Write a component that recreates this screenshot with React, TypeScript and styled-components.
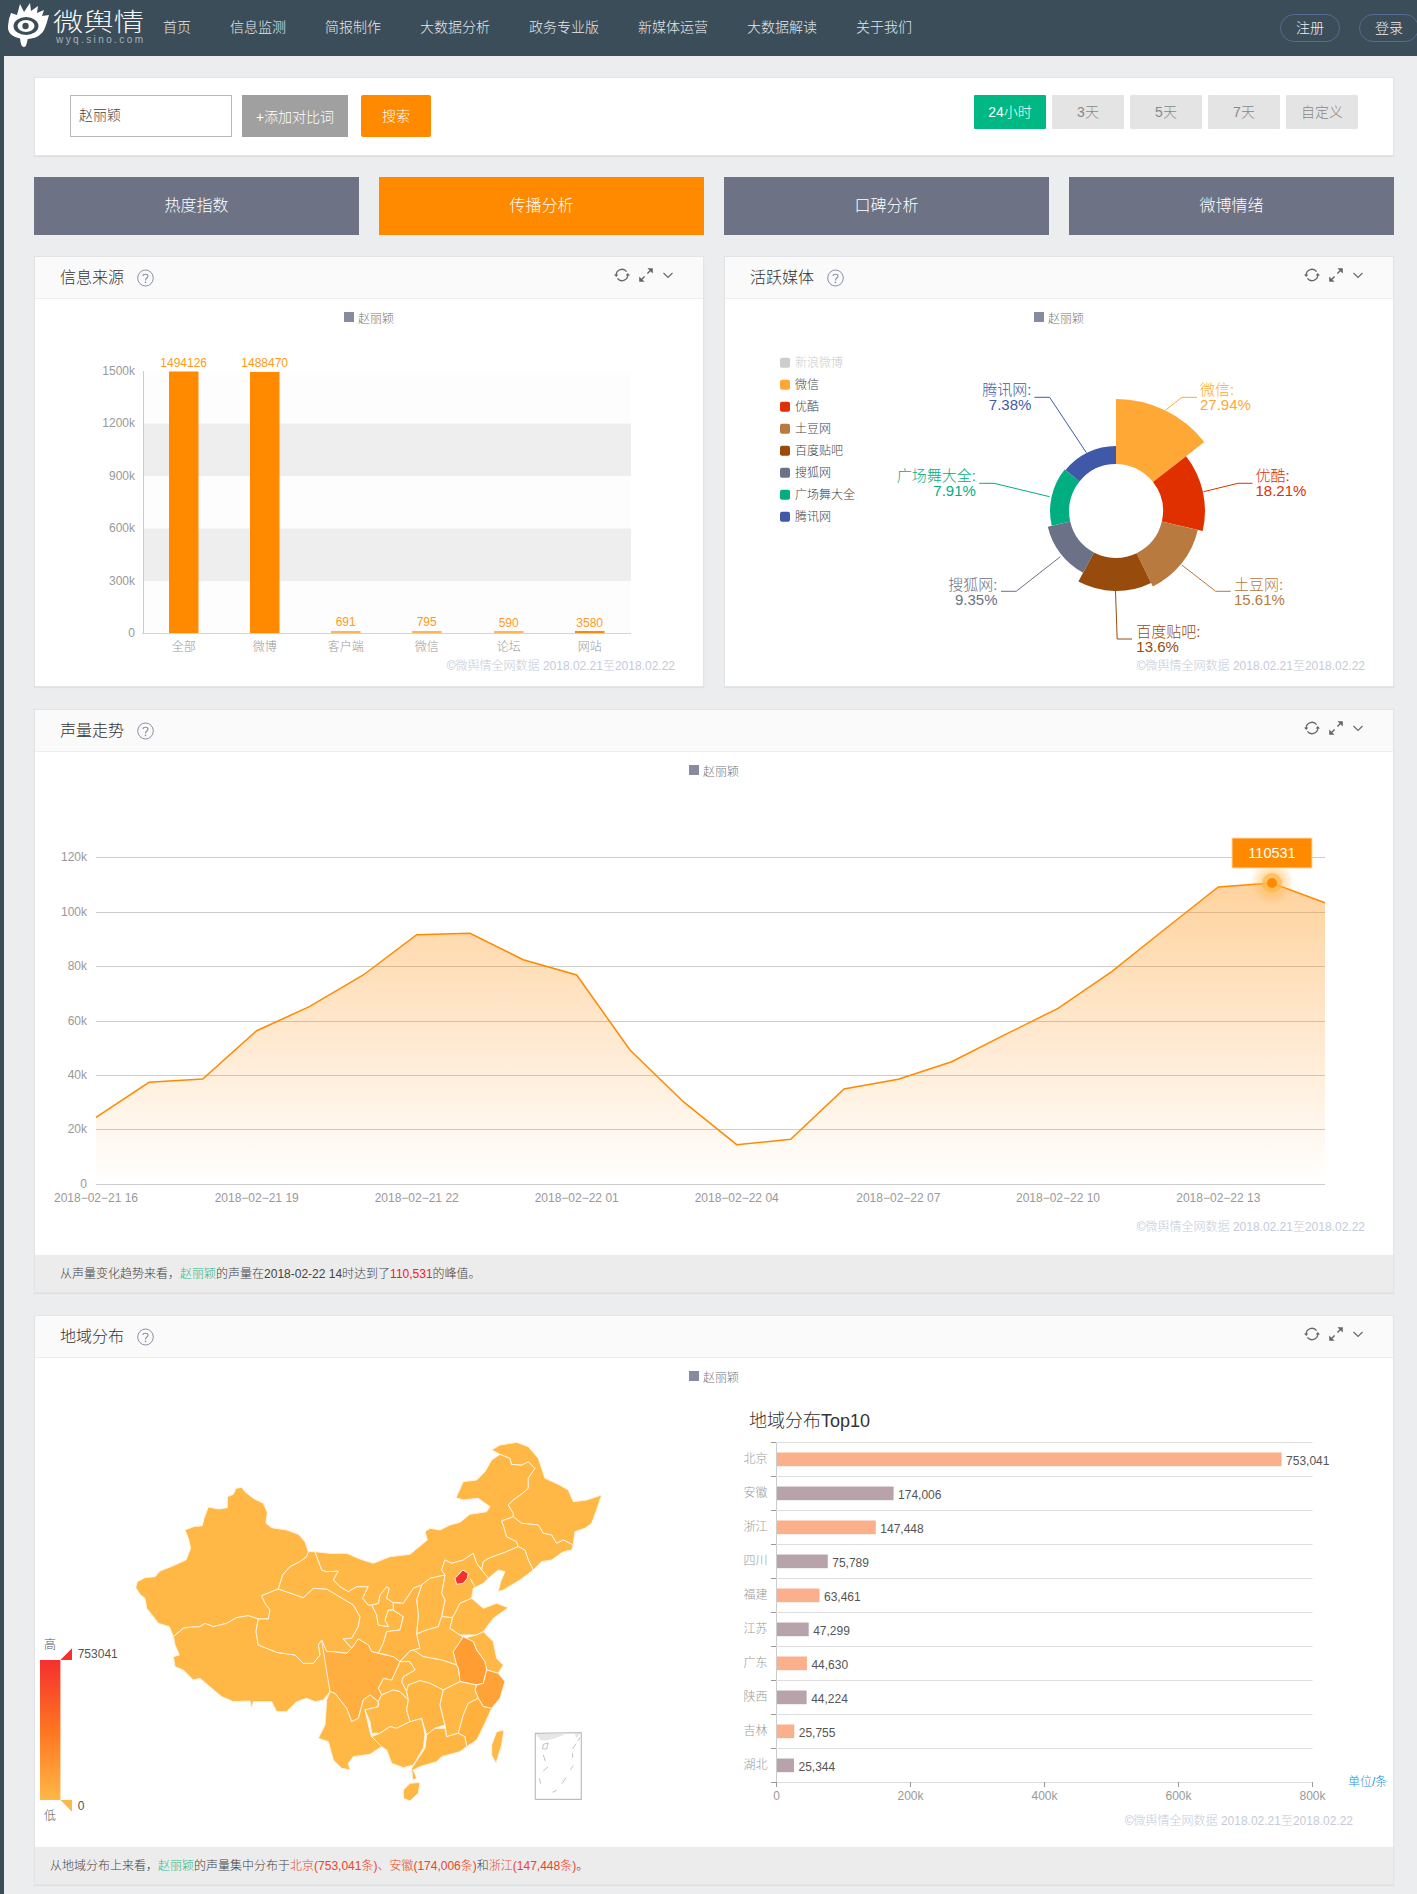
import React from "react";
import styled, { createGlobalStyle } from "styled-components";

const ORANGE = "#ff8a00";
const SLATE = "#3b4d58";

const GlobalStyle = createGlobalStyle`
  * { box-sizing: border-box; }
  html, body { margin: 0; padding: 0; }
  body {
    background: #ecedef;
    font-family: "Liberation Sans", "Noto Sans CJK SC", sans-serif;
    font-weight: 300;
    overflow-x: hidden;
  }
`;

const NAV = ["首页", "信息监测", "简报制作", "大数据分析", "政务专业版", "新媒体运营", "大数据解读", "关于我们"];
const RANGES = ["24小时", "3天", "5天", "7天", "自定义"];
const TABS = ["热度指数", "传播分析", "口碑分析", "微博情绪"];

const BARS = [
  { name: "全部", value: "1494126", x: 169, top: 371.5, vy: 363, color: ORANGE },
  { name: "微博", value: "1488470", x: 250, top: 372, vy: 363, color: ORANGE },
  { name: "客户端", value: "691", x: 331, top: 631, vy: 622, color: "#ffb652" },
  { name: "微信", value: "795", x: 412, top: 631, vy: 622, color: "#ffb652" },
  { name: "论坛", value: "590", x: 494, top: 631, vy: 623, color: "#ffb652" },
  { name: "网站", value: "3580", x: 575, top: 631, vy: 623, color: ORANGE },
];

const MEDIA_LEGEND = [
  { name: "新浪微博", color: "#ccc", off: true },
  { name: "微信", color: "#ffa836" },
  { name: "优酷", color: "#e03000" },
  { name: "土豆网", color: "#b87a3e" },
  { name: "百度贴吧", color: "#974b0d" },
  { name: "搜狐网", color: "#6b7186" },
  { name: "广场舞大全", color: "#00ae80" },
  { name: "腾讯网", color: "#3f59a8" },
];

const SLICES = [
  { from: 0, to: 52, r: 112, color: "#ffa836", name: "微信:", pct: "27.94%", line: "1165.8,410 1181.8,397.3 1197,397.3", tx: 1200, ty: 389.3, anchor: "start" },
  { from: 52, to: 103, r: 89, color: "#e03000", name: "优酷:", pct: "18.21%", line: "1203.5,491.7 1238,483.3 1252.5,483.3", tx: 1255.5, ty: 475.3, anchor: "start" },
  { from: 103, to: 154, r: 84, color: "#b87a3e", name: "土豆网:", pct: "15.61%", line: "1181.8,565 1215.7,591.3 1230.8,591.3", tx: 1234, ty: 584, anchor: "start" },
  { from: 154, to: 208, r: 80, color: "#974b0d", name: "百度贴吧:", pct: "13.6%", line: "1115.5,591 1117.2,639 1132,639", tx: 1136.3, ty: 631.7, anchor: "start" },
  { from: 208, to: 257, r: 70, color: "#6b7186", name: "搜狐网:", pct: "9.35%", line: "1060.4,556.7 1016.2,591.3 1001,591.3", tx: 997.5, ty: 584, anchor: "end" },
  { from: 257, to: 309, r: 66, color: "#00ae80", name: "广场舞大全:", pct: "7.91%", line: "1049.6,496.7 994,483.3 979.3,483.3", tx: 975.9, ty: 475.3, anchor: "end" },
  { from: 309, to: 360, r: 65, color: "#3f59a8", name: "腾讯网:", pct: "7.38%", line: "1086.4,452.7 1049.6,397.3 1034.4,397.3", tx: 1031.4, ty: 389.3, anchor: "end" },
];

const TREND: [number, number][] = [
  [96, 1117.3], [149, 1082.3], [202.7, 1079], [256.7, 1030.7], [309.3, 1006.7], [363.3, 975],
  [416.7, 934.7], [470, 933.3], [523.3, 959.7], [576.7, 975], [630, 1050], [683.3, 1101.7],
  [736.7, 1144.7], [790.7, 1139.3], [844, 1089], [898.3, 1079.3], [951.7, 1061.7], [1005, 1034.7],
  [1058, 1008.3], [1111.7, 971.7], [1165, 929], [1218.3, 887], [1271.7, 883], [1325, 902.7],
];
const TREND_TICKS = [
  ["120k", 857.5], ["100k", 912.5], ["80k", 966.5], ["60k", 1021.5], ["40k", 1075.5], ["20k", 1129.5], ["0", 1184.5],
] as const;
const TREND_DATES = [
  ["2018−02−21 16", 96], ["2018−02−21 19", 256.7], ["2018−02−21 22", 416.7], ["2018−02−22 01", 576.7],
  ["2018−02−22 04", 736.7], ["2018−02−22 07", 898.3], ["2018−02−22 10", 1058], ["2018−02−22 13", 1218.3],
] as const;

const TOP10 = [
  ["北京", 753041], ["安徽", 174006], ["浙江", 147448], ["四川", 75789], ["福建", 63461],
  ["江苏", 47299], ["广东", 44630], ["陕西", 44224], ["吉林", 25755], ["湖北", 25344],
] as const;

// province outlines, in the coordinates of a 1500x1140 canvas
const BASE = "#ffb846";
const PROVINCES: { fill?: string; d: string }[] = [
  { d: "555,350 535,350 525,320 505,298 470,285 425,278 408,265 412,232 400,205 370,190 345,170 335,157 318,160 310,178 292,185 292,218 265,222 235,216 222,250 217,272 190,275 165,285 175,310 182,340 168,375 130,392 90,408 75,425 45,428 22,440 17,458 30,478 45,490 50,520 70,545 85,565 118,575 130,605 160,580 175,577 210,575 225,565 250,575 290,565 320,548 355,542 385,552 415,552 420,525 405,505 395,482 445,462 458,420 480,395 510,380 530,365" },
  { d: "130,605 160,580 175,577 210,575 225,565 250,575 290,565 320,548 355,542 385,552 378,590 385,630 440,652 495,660 520,685 550,685 570,660 565,630 575,615 590,650 600,770 580,795 555,800 530,790 500,800 470,830 440,830 425,800 370,800 365,820 360,798 310,800 275,785 245,760 210,730 190,735 160,705 135,695 130,665 148,660 135,630" },
  { d: "395,482 445,462 520,488 550,460 590,462 620,480 670,510 690,545 685,575 665,610 640,612 665,640 650,655 610,650 590,650 575,615 565,630 570,660 550,685 520,685 495,660 440,652 385,630 378,590 385,552 415,552 420,525 405,505" },
  { d: "555,350 535,350 530,365 510,380 480,395 458,420 445,462 520,488 550,460 590,462 620,480 670,510 690,545 685,575 665,610 640,612 665,640 685,612 715,630 725,650 745,655 760,625 770,590 810,585 820,545 790,525 775,525 765,555 775,575 745,570 740,540 725,510 715,510 698,490 715,455 680,455 655,470 630,455 610,435 625,408 590,410 575,405" },
  { d: "725,510 745,505 750,480 770,455 778,460 770,490 790,503 790,525 775,525 765,555 775,575 745,570 740,540" },
  { d: "555,350 600,355 650,355 690,372 730,385 780,365 840,358 880,325 892,315 885,290 900,280 930,285 960,270 990,262 1020,238 1070,230 1080,215 1045,190 1000,195 978,188 1000,140 1040,135 1065,110 1085,75 1110,58 1140,70 1145,88 1175,90 1195,80 1215,100 1195,130 1195,160 1178,175 1150,195 1135,210 1150,235 1150,245 1115,258 1120,270 1130,305 1160,320 1165,335 1125,352 1080,368 1060,380 1055,405 1040,385 1030,355 1000,375 965,385 945,375 935,405 945,420 900,430 875,450 850,460 820,505 790,503 770,490 778,460 770,455 750,480 745,505 725,510 715,510 698,490 715,455 680,455 655,470 630,455 610,435 625,408 590,410 575,405" },
  { d: "1110,30 1160,22 1195,35 1225,70 1245,130 1285,148 1315,165 1330,200 1370,195 1415,180 1400,225 1385,265 1365,280 1335,290 1330,330 1300,315 1280,325 1265,300 1240,295 1225,270 1175,265 1150,245 1150,235 1135,210 1150,195 1178,175 1195,160 1195,130 1215,100 1195,80 1175,90 1145,88 1140,70 1110,58 1085,45" },
  { d: "1115,258 1150,245 1175,265 1225,270 1240,295 1265,300 1280,325 1300,315 1330,330 1325,345 1300,350 1265,375 1235,380 1210,405 1195,375 1185,345 1165,335 1160,320 1130,305 1120,270" },
  { d: "1165,335 1185,345 1195,375 1210,405 1170,435 1120,465 1105,470 1112,440 1125,410 1105,405 1075,430 1055,405 1060,380 1080,368 1125,352" },
  { d: "945,375 965,385 1000,375 1030,355 1040,385 1055,405 1075,430 1060,445 1030,460 1025,490 990,505 975,535 968,548 935,545 945,495 935,475 945,420 935,405" },
  { d: "945,420 935,475 945,495 935,545 925,575 890,585 860,597 865,540 860,495 875,450 900,430" },
  { fill: "#ffb443", d: "875,450 860,495 865,540 860,597 870,640 840,648 810,680 790,665 750,655 745,655 760,625 770,590 810,585 820,545 790,525 790,503 820,505 850,460" },
  { d: "860,597 890,585 925,575 935,545 968,548 960,580 990,600 1000,610 970,650 980,690 935,675 880,665 850,645 870,640" },
  { d: "968,548 975,535 990,505 1025,490 1060,520 1100,505 1135,518 1090,550 1060,590 1040,600 1000,600 990,600 960,580" },
  { d: "1000,610 1040,600 1060,590 1090,620 1100,670 1120,690 1105,715 1070,705 1065,680 1040,645 1030,620" },
  { fill: "#ff9d33", d: "1000,605 1030,620 1040,645 1065,680 1070,705 1060,745 1040,750 990,740 985,700 980,690 970,650" },
  { fill: "#ffa238", d: "1070,705 1105,715 1125,740 1110,790 1085,820 1060,815 1045,790 1035,765 1040,750 1060,745" },
  { d: "810,680 840,648 850,645 880,665 935,675 980,690 985,700 990,740 940,765 900,745 870,737 835,750 830,770 815,740 820,725 855,705 840,680" },
  { d: "745,760 760,730 785,735 810,680 840,680 855,705 820,725 815,740 830,770 835,795 810,770 790,765 755,780" },
  { fill: "#ffae3f", d: "575,615 590,650 610,650 650,655 665,640 685,612 715,630 725,650 745,655 790,665 810,680 785,735 760,730 745,760 755,780 745,800 720,780 700,795 685,850 665,860 650,820 615,775 600,770" },
  { d: "600,770 615,775 650,820 665,860 685,850 700,795 720,780 745,800 745,815 705,825 720,890 725,905 755,935 720,958 670,965 655,985 660,1005 635,1000 610,975 595,920 565,910 585,870 590,795" },
  { d: "745,800 755,780 790,765 810,770 835,795 830,825 840,860 800,880 780,875 750,895 725,895 720,860 705,825 745,815" },
  { d: "725,905 750,895 780,875 800,880 840,860 875,850 885,900 880,940 850,990 820,998 785,985 770,945 755,935" },
  { fill: "#ffb542", d: "835,750 870,737 900,745 940,765 930,810 945,870 915,880 890,900 875,850 840,860 830,825 835,795 830,770" },
  { d: "940,765 990,740 1040,750 1035,765 1045,790 1015,805 1000,840 985,895 950,905 945,870 930,810" },
  { fill: "#ffb03d", d: "1045,790 1060,815 1085,820 1065,865 1040,915 1010,935 1005,905 985,895 1000,840 1015,805" },
  { fill: "#ffb542", d: "890,900 915,880 945,880 950,905 985,895 1005,905 1010,935 990,950 935,965 920,980 870,995 850,1005 860,1030 848,1035 845,1000 885,940" },
  { d: "820,1065 840,1045 870,1042 865,1075 840,1098 820,1090" },
  { d: "1100,890 1122,885 1115,930 1098,985 1085,960 1085,930" },
  { fill: "#f6302f", d: "975,430 985,420 998,405 1015,415 1012,430 1000,445 980,448" },
];

const slicePath = (from: number, to: number, r: number) => {
  const cx = 1116;
  const cy = 511;
  const inner = 47;
  const pt = (a: number, rad: number) => {
    const t = (a * Math.PI) / 180;
    return `${(cx + rad * Math.sin(t)).toFixed(1)} ${(cy - rad * Math.cos(t)).toFixed(1)}`;
  };
  return `M${pt(from, inner)} L${pt(from, r)} A${r} ${r} 0 0 1 ${pt(to, r)} L${pt(to, inner)} A${inner} ${inner} 0 0 0 ${pt(from, inner)} Z`;
};

const Logo = () => (
  <LogoSvg width="163" height="56" viewBox="0 0 163 56">
    <path fill="#fff" d="M9 19 L11 13 L17 15 L20 4 L24 12 L30 3 L31 11 L38 6 L37 13 L44 10 L42 16 L49 15 C47 22 46 26 44 30 C40 37 33 39 26 39 C15 39 7 34 8 26 Z" />
    <ellipse cx="26" cy="26" rx="12.5" ry="9" fill={SLATE} />
    <ellipse cx="26" cy="26" rx="8.5" ry="6" fill="#fff" />
    <circle cx="25.5" cy="26" r="3.2" fill={SLATE} />
    <path fill="#fff" d="M20 38 L28 38 C27 42 26.5 47 24 47 C21 47 20.5 42 20 38 Z" />
    <LogoName x="53" y="31" textLength="91" lengthAdjust="spacingAndGlyphs">微舆情</LogoName>
    <LogoUrl x="56" y="43" textLength="87">wyq.sino.com</LogoUrl>
  </LogoSvg>
);

const HelpIcon = () => (
  <HelpSvg width="17" height="18" viewBox="0 0 17 18">
    <ellipse cx="8.5" cy="9" rx="7.8" ry="8" fill="none" stroke="#8b90a3" strokeWidth="1" />
    <path d="M6 7 C6 4.8 11 4.6 11 7.2 C11 9 8.5 9 8.5 11.4" fill="none" stroke="#8b90a3" strokeWidth="1.1" />
    <circle cx="8.5" cy="13.4" r="0.8" fill="#8b90a3" />
  </HelpSvg>
);

const RefreshIcon = () => (
  <svg width="16" height="16" viewBox="0 0 16 16">
    <path d="M2.2 8 A5.8 5.8 0 0 1 12.6 4.6 M13.8 8 A5.8 5.8 0 0 1 3.4 11.4" fill="none" stroke="#666" strokeWidth="1.3" />
    <path d="M0 7.4 L4.4 7.4 L2.2 10 Z M16 8.6 L11.6 8.6 L13.8 6 Z" fill="#666" />
  </svg>
);

const ExpandIcon = () => (
  <svg width="16" height="16" viewBox="0 0 16 16">
    <path d="M3 13 L6.6 9.4 M13 3 L9.4 6.6" stroke="#666" strokeWidth="1.4" />
    <path d="M1.2 9.4 L1.2 14.8 L6.6 14.8 Z M14.8 1.2 L9.4 1.2 L14.8 6.6 Z" fill="#666" />
  </svg>
);

const ChevronIcon = () => (
  <svg width="12" height="12" viewBox="0 0 12 12">
    <path d="M1.5 4 L6 8.5 L10.5 4" fill="none" stroke="#666" strokeWidth="1.1" />
  </svg>
);

const PanelHead = ({ title }: { title: string }) => (
  <Head>
    <HeadTitle>{title}</HeadTitle>
    <HelpIcon />
    <HeadTools>
      <RefreshIcon />
      <ExpandIcon />
      <ChevronIcon />
    </HeadTools>
  </Head>
);

const Legend = () => (
  <LegendRow>
    <LegendSwatch />
    赵丽颖
  </LegendRow>
);

const COPY = "©微舆情全网数据 2018.02.21至2018.02.22";

const SourceChart = () => (
  <ChartSvg width="667" height="320" viewBox="35 337 667 320">
    <rect x="144" y="371" width="487" height="52.5" fill="#fdfdfd" />
    <rect x="144" y="423.5" width="487" height="52.5" fill="#eee" />
    <rect x="144" y="476" width="487" height="52.5" fill="#fdfdfd" />
    <rect x="144" y="528.5" width="487" height="52.5" fill="#eee" />
    <rect x="144" y="581" width="487" height="52" fill="#fdfdfd" />
    <line x1="143.5" y1="371" x2="143.5" y2="633" stroke="#ccc" />
    <line x1="142" y1="633.5" x2="631" y2="633.5" stroke="#d4d4d8" />
    {["1500k", "1200k", "900k", "600k", "300k", "0"].map((t, i) => (
      <AxisText key={t} x="135" y={371 + i * 52.4} textAnchor="end" dominantBaseline="central">
        {t}
      </AxisText>
    ))}
    {BARS.map((b) => (
      <g key={b.name}>
        <rect x={b.x} y={b.top} width="29.5" height={633 - b.top} fill={b.color} />
        <ValueText x={b.x + 14.7} y={b.vy} textAnchor="middle" dominantBaseline="central">
          {b.value}
        </ValueText>
        <AxisText x={b.x + 14.7} y="647" textAnchor="middle" dominantBaseline="central">
          {b.name}
        </AxisText>
      </g>
    ))}
  </ChartSvg>
);

const MediaChart = () => (
  <ChartSvg width="667" height="320" viewBox="725 337 667 320">
    {MEDIA_LEGEND.map((m, i) => (
      <g key={m.name}>
        <rect x="780" y={357.7 + i * 22} width="10" height="10" rx="2" fill={m.color} />
        <SeriesText x="795" y={362.7 + i * 22} $off={m.off} dominantBaseline="central">
          {m.name}
        </SeriesText>
      </g>
    ))}
    {SLICES.map((s) => (
      <g key={s.name}>
        <path d={slicePath(s.from, s.to, s.r)} fill={s.color} />
        <polyline points={s.line} fill="none" stroke={s.color} strokeWidth="1" />
        <PieLabel x={s.tx} y={s.ty} fill={s.color} textAnchor={s.anchor as "start" | "end"} dominantBaseline="central">
          {s.name}
        </PieLabel>
        <PieLabel x={s.tx} y={s.ty + 15} fill={s.color} textAnchor={s.anchor as "start" | "end"} dominantBaseline="central">
          {s.pct}
        </PieLabel>
      </g>
    ))}
  </ChartSvg>
);

const TrendChart = () => {
  const line = TREND.map(([x, y]) => `${x},${y}`).join(" ");
  return (
    <ChartSvg width="1357" height="428" viewBox="35 790 1357 428">
      <defs>
        <linearGradient id="trendFill" x1="0" y1="883" x2="0" y2="1184" gradientUnits="userSpaceOnUse">
          <stop offset="0" stopColor={ORANGE} stopOpacity="0.38" />
          <stop offset="1" stopColor={ORANGE} stopOpacity="0" />
        </linearGradient>
        <radialGradient id="peakGlow">
          <stop offset="0.4" stopColor="#ffb84d" stopOpacity="0.55" />
          <stop offset="1" stopColor="#ffb84d" stopOpacity="0" />
        </radialGradient>
      </defs>
      {TREND_TICKS.map(([t, y]) => (
        <g key={t}>
          <line x1="96" y1={y} x2="1325" y2={y} stroke="#ccc" />
          <AxisText x="87" y={y - 0.5} textAnchor="end" dominantBaseline="central">
            {t}
          </AxisText>
        </g>
      ))}
      {TREND_DATES.map(([t, x]) => (
        <AxisText key={t} x={x} y="1198" textAnchor="middle" dominantBaseline="central">
          {t}
        </AxisText>
      ))}
      <polygon points={`96,1184 ${line} 1325,1184`} fill="url(#trendFill)" />
      <polyline points={line} fill="none" stroke={ORANGE} strokeWidth="1.5" />
      <circle cx="1272" cy="883" r="22" fill="url(#peakGlow)" />
      <circle cx="1272" cy="883" r="10" fill="#ffb84d" opacity="0.7" />
      <circle cx="1272" cy="883" r="5" fill={ORANGE} />
      <rect x="1232" y="838" width="80" height="30" fill={ORANGE} stroke="#ffd9a8" />
      <PeakText x="1272" y="853" textAnchor="middle" dominantBaseline="central">
        110531
      </PeakText>
    </ChartSvg>
  );
};

const ChinaMap = () => (
  <ChartSvg width="680" height="451" viewBox="35 1396 680 451">
    <defs>
      <linearGradient id="scale" x1="0" y1="0" x2="0" y2="1">
        <stop offset="0" stopColor="#f5302f" />
        <stop offset="0.5" stopColor="#ff7420" />
        <stop offset="1" stopColor={BASE} />
      </linearGradient>
    </defs>
    <g transform="translate(130 1435) scale(0.3333)">
      {PROVINCES.map((p, i) => (
        <polygon key={i} points={p.d} fill={p.fill || BASE} stroke="#fff3df" strokeWidth="3" strokeLinejoin="round" />
      ))}
      <path d="M1020 430 L1035 455" stroke="#fff3df" strokeWidth="3" />
      <polygon points="1216,895 1354,893 1354,1093 1216,1093" fill="#fff" stroke="#bdbdbd" strokeWidth="3.5" />
      <path d="M1218 897 L1310 895 C1290 905 1262 918 1232 916 Z" fill="#e6e6e6" />
      <path d="M1332 895 L1352 895 L1340 908 Z" fill="#e6e6e6" />
      <path
        d="M1240 928 L1255 924 L1250 942 L1238 942 Z M1240 960 L1246 978 M1254 996 L1240 1008 M1228 1030 L1232 1046 M1268 1072 L1280 1066 M1296 1046 L1308 1028 M1322 1004 L1330 992 M1328 968 L1328 954 M1328 942 L1338 926 M1344 918 L1350 908"
        fill="none"
        stroke="#b5b5b5"
        strokeWidth="2.5"
      />
    </g>
    <rect x="40" y="1660" width="20.4" height="140" fill="url(#scale)" />
    <polygon points="60.4,1660 72,1660 72,1648.3" fill="#f5302f" />
    <polygon points="60.4,1800 72,1800 72,1811.7" fill={BASE} />
    <ScaleText x="50" y="1644.5" textAnchor="middle" dominantBaseline="central">
      高
    </ScaleText>
    <ScaleText x="50" y="1816" textAnchor="middle" dominantBaseline="central">
      低
    </ScaleText>
    <ScaleText x="77.7" y="1654" dominantBaseline="central">
      753041
    </ScaleText>
    <ScaleText x="77.7" y="1805.7" dominantBaseline="central">
      0
    </ScaleText>
  </ChartSvg>
);

const TopChart = () => (
  <ChartSvg width="677" height="416" viewBox="715 1396 677 416">
    <TopTitle x="749" y="1421" dominantBaseline="central">
      地域分布Top10
    </TopTitle>
    <line x1="776.5" y1="1442" x2="776.5" y2="1783" stroke="#ccc" />
    {Array.from({ length: 11 }).map((_, i) => (
      <g key={i}>
        <line x1="771" y1={1442.5 + i * 34} x2="1312.5" y2={1442.5 + i * 34} stroke="#ddd" />
        <line x1="771" y1={1442.5 + i * 34} x2="776" y2={1442.5 + i * 34} stroke="#999" />
      </g>
    ))}
    {TOP10.map(([name, v], i) => {
      const w = (v / 800000) * 536;
      const y = 1442.5 + i * 34;
      return (
        <g key={name}>
          <AxisText x="767.5" y={y + 16.5} textAnchor="end" dominantBaseline="central">
            {name}
          </AxisText>
          <rect x="777" y={y + 10} width={w} height="13.7" fill={i % 2 ? "#b9a3ab" : "#fbb08b"} />
          <CountText x={776.5 + w + 5} y={y + 18.5} dominantBaseline="central">
            {v.toLocaleString("en-US")}
          </CountText>
        </g>
      );
    })}
    {["0", "200k", "400k", "600k", "800k"].map((t, i) => (
      <g key={t}>
        <line x1={776.5 + i * 134} y1="1782" x2={776.5 + i * 134} y2="1787" stroke="#999" />
        <AxisText x={776.5 + i * 134} y="1796" textAnchor="middle" dominantBaseline="central">
          {t}
        </AxisText>
      </g>
    ))}
    <UnitText x="1348" y="1782" dominantBaseline="central">
      单位/条
    </UnitText>
  </ChartSvg>
);

export default function App() {
  return (
    <>
      <GlobalStyle />
      <Header>
        <Logo />
        <Nav>
          {NAV.map((n) => (
            <NavItem key={n}>{n}</NavItem>
          ))}
        </Nav>
        <Auth>
          <AuthButton>注册</AuthButton>
          <AuthButton>登录</AuthButton>
        </Auth>
      </Header>
      <Main>
        <SearchCard>
          <KeywordInput readOnly value="赵丽颖" />
          <AddButton>+添加对比词</AddButton>
          <SearchButton>搜索</SearchButton>
          <Ranges>
            {RANGES.map((r, i) => (
              <RangeButton key={r} $active={i === 0}>
                {r}
              </RangeButton>
            ))}
          </Ranges>
        </SearchCard>
        <Tabs>
          {TABS.map((t, i) => (
            <Tab key={t} $active={i === 1}>
              {t}
            </Tab>
          ))}
        </Tabs>
        <TwoPanels>
          <Panel>
            <PanelHead title="信息来源" />
            <Legend />
            <SourceChart />
            <Copyright $pad={11}>{COPY}</Copyright>
          </Panel>
          <Panel>
            <PanelHead title="活跃媒体" />
            <Legend />
            <MediaChart />
            <Copyright $pad={11}>{COPY}</Copyright>
          </Panel>
        </TwoPanels>
        <Panel>
          <PanelHead title="声量走势" />
          <Legend />
          <TrendChart />
          <Copyright $pad={19}>{COPY}</Copyright>
          <Note>
            从声量变化趋势来看，<Green>赵丽颖</Green>的声量在2018-02-22 14时达到了<Red>110,531</Red>的峰值。
          </Note>
        </Panel>
        <Panel>
          <PanelHead title="地域分布" />
          <Legend />
          <MapRow>
            <ChinaMap />
            <MapSide>
              <TopChart />
              <Copyright $pad={0} $right={40}>
                {COPY}
              </Copyright>
            </MapSide>
          </MapRow>
          <Note $left={15}>
            从地域分布上来看，<Green>赵丽颖</Green>的声量集中分布于<Hot>北京(753,041条)、安徽(174,006条)</Hot>和
            <Hot>浙江(147,448条)</Hot>。
          </Note>
        </Panel>
      </Main>
    </>
  );
}

const Header = styled.header`
  display: flex;
  align-items: center;
  height: 56px;
  background: ${SLATE};
  overflow: hidden;
`;

const LogoSvg = styled.svg`
  display: block;
  flex: none;
`;

const LogoName = styled.text`
  font-size: 25px;
  fill: #f4f5f6;
`;

const LogoUrl = styled.text`
  font-size: 10px;
  fill: #a9b3b9;
`;

const Nav = styled.nav`
  display: flex;
  gap: 39px;
  margin-top: -4px;
`;

const NavItem = styled.span`
  font-size: 14px;
  color: #e4e7e9;
`;

const Auth = styled.div`
  display: flex;
  gap: 19px;
  margin-left: auto;
  margin-right: -2px;
`;

const AuthButton = styled.span`
  width: 60px;
  height: 28px;
  border: 1px solid #566a92;
  border-radius: 14px;
  color: #eef0f2;
  font-size: 14px;
  line-height: 26px;
  text-align: center;
`;

const Main = styled.main`
  display: flex;
  flex-direction: column;
  gap: 22px;
  border-left: 4px solid ${SLATE};
  padding: 21px 23px 9px 30px;
`;

const SearchCard = styled.section`
  display: flex;
  align-items: flex-start;
  height: 79px;
  padding: 17px 35px 0;
  background: #fff;
  border: 1px solid #e3e4e6;
  box-shadow: 0 1px 1px rgba(0, 0, 0, 0.05);
`;

const KeywordInput = styled.input`
  width: 162px;
  height: 42px;
  padding: 0 8px 4px;
  border: 1px solid #b8b8b8;
  outline: none;
  border-radius: 0;
  font: inherit;
  font-size: 14px;
  color: #444;
`;

const AddButton = styled.span`
  width: 106px;
  height: 42px;
  margin-left: 10px;
  background: #a0a0a0;
  color: #fff;
  font-size: 14px;
  line-height: 44px;
  text-align: center;
`;

const SearchButton = styled.span`
  width: 70px;
  height: 42px;
  margin-left: 13px;
  background: ${ORANGE};
  border-radius: 2px;
  color: #fff;
  font-size: 14px;
  line-height: 42px;
  text-align: center;
`;

const Ranges = styled.div`
  display: flex;
  gap: 6px;
  margin-left: auto;
`;

const RangeButton = styled.span<{ $active?: boolean }>`
  width: 72px;
  height: 34px;
  background: ${(p) => (p.$active ? "#00b884" : "#e4e4e4")};
  border-radius: 1px;
  color: ${(p) => (p.$active ? "#fff" : "#888")};
  font-size: 14px;
  line-height: 34px;
  text-align: center;
`;

const Tabs = styled.div`
  display: grid;
  grid-template-columns: repeat(4, 1fr);
  gap: 20px;
  margin-top: -1px;
  margin-bottom: -1px;
`;

const Tab = styled.div<{ $active?: boolean }>`
  height: 58px;
  background: ${(p) => (p.$active ? ORANGE : "#6d7385")};
  color: #fff;
  font-size: 16px;
  line-height: 57px;
  text-align: center;
`;

const TwoPanels = styled.div`
  display: grid;
  grid-template-columns: 670px 670px;
  gap: 20px;
`;

const Panel = styled.section`
  background: #fff;
  border: 1px solid #e3e4e6;
  box-shadow: 0 1px 1px rgba(0, 0, 0, 0.05);
`;

const Head = styled.div`
  display: flex;
  align-items: center;
  height: 42px;
  padding: 0 29px 0 25px;
  background: #fafafa;
  border-bottom: 1px solid #eee;
`;

const HeadTitle = styled.h2`
  margin: 0 13px 0 0;
  color: #333;
  font-size: 16px;
  font-weight: 300;
  position: relative;
  top: -2px;
`;

const HelpSvg = styled.svg`
  display: block;
`;

const HeadTools = styled.div`
  display: flex;
  align-items: center;
  gap: 8px;
  margin-left: auto;
  margin-top: -5px;
`;

const LegendRow = styled.div`
  display: flex;
  align-items: center;
  justify-content: center;
  gap: 4px;
  height: 38px;
  padding-bottom: 2px;
  color: #777;
  font-size: 12px;
`;

const LegendSwatch = styled.i`
  width: 10px;
  height: 10px;
  background: #878b9d;
`;

const ChartSvg = styled.svg`
  display: block;
`;

const Copyright = styled.div<{ $pad: number; $right?: number }>`
  height: 18px;
  margin-bottom: ${(p) => p.$pad}px;
  padding-right: ${(p) => p.$right ?? 28}px;
  color: #c5cad8;
  font-size: 12px;
  line-height: 18px;
  text-align: right;
`;

const Note = styled.div<{ $left?: number }>`
  height: 37px;
  padding-left: ${(p) => p.$left ?? 25}px;
  background: #ececec;
  color: #444;
  font-size: 12px;
  line-height: 39px;
  white-space: pre-wrap;
`;

const Green = styled.span`
  color: #1fb88e;
`;

const Red = styled.span`
  color: #f02020;
`;

const Hot = styled.span`
  color: #e8452a;
`;

const MapRow = styled.div`
  display: flex;
  height: 451px;
`;

const MapSide = styled.div`
  flex: 1;
`;

const AxisText = styled.text`
  fill: #999;
  font-size: 12px;
`;

const ValueText = styled.text`
  fill: #ff9a20;
  font-size: 12px;
`;

const SeriesText = styled.text<{ $off?: boolean }>`
  fill: ${(p) => (p.$off ? "#ccc" : "#444")};
  font-size: 12px;
`;

const PieLabel = styled.text`
  font-size: 15px;
`;

const PeakText = styled.text`
  fill: #fff;
  font-size: 14.5px;
`;

const ScaleText = styled.text`
  fill: #555;
  font-size: 12px;
`;

const TopTitle = styled.text`
  fill: #333;
  font-size: 18px;
`;

const CountText = styled.text`
  fill: #555;
  font-size: 12px;
`;

const UnitText = styled.text`
  fill: #1890dd;
  font-size: 12px;
`;
